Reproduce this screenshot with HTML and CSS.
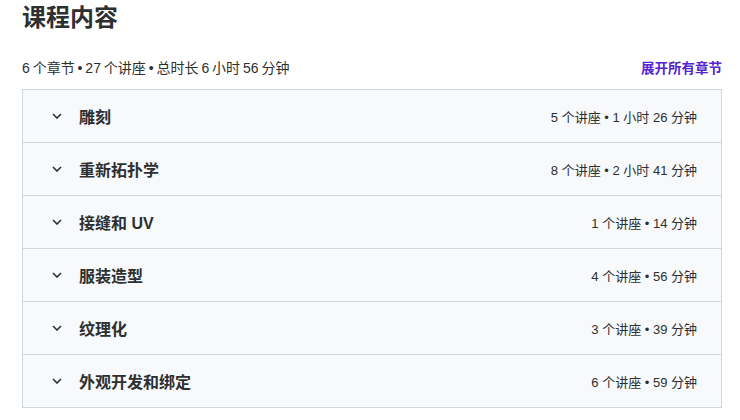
FILE: index.html
```html
<!DOCTYPE html>
<html lang="zh">
<head>
<meta charset="utf-8">
<link rel="stylesheet" href="styles.css">
</head>
<body>
<div class="page">
  <h2 class="title">课程内容</h2>
  <div class="meta">
    <span class="summary">6 个章节 • 27 个讲座 • 总时长 6 小时 56 分钟</span>
    <button class="expand">展开所有章节</button>
  </div>
  <div class="sections">
    <div class="section">
      <svg class="chev" viewBox="0 0 10 6"><path d="M1 1l4 4 4-4" fill="none" stroke="#2d2f31" stroke-width="1.6"/></svg>
      <span class="name">雕刻</span>
      <span class="stats">5 个讲座 • 1 小时 26 分钟</span>
    </div>
    <div class="section">
      <svg class="chev" viewBox="0 0 10 6"><path d="M1 1l4 4 4-4" fill="none" stroke="#2d2f31" stroke-width="1.6"/></svg>
      <span class="name">重新拓扑学</span>
      <span class="stats">8 个讲座 • 2 小时 41 分钟</span>
    </div>
    <div class="section">
      <svg class="chev" viewBox="0 0 10 6"><path d="M1 1l4 4 4-4" fill="none" stroke="#2d2f31" stroke-width="1.6"/></svg>
      <span class="name">接缝和 UV</span>
      <span class="stats">1 个讲座 • 14 分钟</span>
    </div>
    <div class="section">
      <svg class="chev" viewBox="0 0 10 6"><path d="M1 1l4 4 4-4" fill="none" stroke="#2d2f31" stroke-width="1.6"/></svg>
      <span class="name">服装造型</span>
      <span class="stats">4 个讲座 • 56 分钟</span>
    </div>
    <div class="section">
      <svg class="chev" viewBox="0 0 10 6"><path d="M1 1l4 4 4-4" fill="none" stroke="#2d2f31" stroke-width="1.6"/></svg>
      <span class="name">纹理化</span>
      <span class="stats">3 个讲座 • 39 分钟</span>
    </div>
    <div class="section">
      <svg class="chev" viewBox="0 0 10 6"><path d="M1 1l4 4 4-4" fill="none" stroke="#2d2f31" stroke-width="1.6"/></svg>
      <span class="name">外观开发和绑定</span>
      <span class="stats">6 个讲座 • 59 分钟</span>
    </div>
  </div>
</div>
</body>
</html>
```

FILE: styles.css
```css
* { box-sizing: border-box; }
body {
  margin: 0;
  background: #fff;
  font-family: "Liberation Sans", "Noto Sans CJK SC", sans-serif;
  color: #2d2f31;
}
.page {
  padding: 0 18px 0 22px;
}
.title {
  margin: 0;
  padding-top: 2px;
  font-size: 24px;
  line-height: 32px;
  font-weight: 700;
}
.meta {
  display: flex;
  justify-content: space-between;
  align-items: center;
  margin-top: 21px;
  height: 24px;
}
.summary {
  font-size: 14px;
  word-spacing: -1px;
}
.expand {
  border: 0;
  background: none;
  padding: 0;
  font-family: inherit;
  font-size: 13.5px;
  font-weight: 700;
  color: #5624d0;
}
.sections {
  margin-top: 10px;
  border: 1px solid #d1d7dc;
}
.section {
  display: flex;
  align-items: center;
  height: 53px;
  background: #f7f9fa;
  border-top: 1px solid #d1d7dc;
  padding: 0 24px 0 29px;
}
.section:first-child { border-top: 0; height: 52px; }
.chev {
  width: 10px;
  height: 6px;
  margin-right: 17px;
}
.name {
  font-size: 16px;
  font-weight: 700;
  flex: 1;
}
.stats {
  font-size: 13px;
}
```
